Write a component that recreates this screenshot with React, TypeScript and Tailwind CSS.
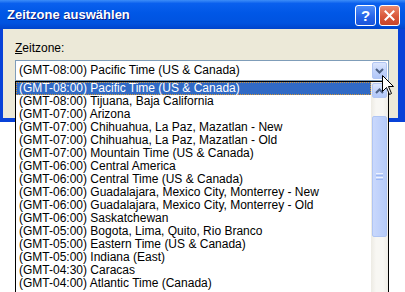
const zones = [
  '(GMT-08:00) Pacific Time (US & Canada)',
  '(GMT-08:00) Tijuana, Baja California',
  '(GMT-07:00) Arizona',
  '(GMT-07:00) Chihuahua, La Paz, Mazatlan - New',
  '(GMT-07:00) Chihuahua, La Paz, Mazatlan - Old',
  '(GMT-07:00) Mountain Time (US & Canada)',
  '(GMT-06:00) Central America',
  '(GMT-06:00) Central Time (US & Canada)',
  '(GMT-06:00) Guadalajara, Mexico City, Monterrey - New',
  '(GMT-06:00) Guadalajara, Mexico City, Monterrey - Old',
  '(GMT-06:00) Saskatchewan',
  '(GMT-05:00) Bogota, Lima, Quito, Rio Branco',
  '(GMT-05:00) Eastern Time (US & Canada)',
  '(GMT-05:00) Indiana (East)',
  '(GMT-04:30) Caracas',
  '(GMT-04:00) Atlantic Time (Canada)',
]

function Chevron({ up }: { up?: boolean }) {
  return (
    <svg width="9" height="6" viewBox="0 0 9 6">
      <polyline
        points={up ? '1,5 4.5,1.5 8,5' : '1,1 4.5,4.5 8,1'}
        fill="none"
        stroke="#4D6185"
        strokeWidth="2"
      />
    </svg>
  )
}

export default function App() {
  return (
    <div className="relative w-[405px] h-[292px] overflow-hidden bg-white font-['Liberation_Sans',Arial,sans-serif] text-[12px] text-black">
      {/* Title bar */}
      <div className="flex items-center justify-between h-[29px] pt-[1px] pl-[7px] pr-[5px] bg-[linear-gradient(to_bottom,#3D8DF8_0%,#0A60EE_12%,#0057E6_45%,#0053E0_80%,#0044CC_100%)]">
        <span className="text-white font-bold text-[13px] [text-shadow:1px_1px_0_#0A1A83]">
          Zeitzone auswählen
        </span>
        <div className="flex gap-[3px]">
          <div className="w-[21px] h-[21px] rounded-[3px] border border-white flex items-center justify-center bg-[linear-gradient(to_bottom,#4F8EF9,#2462E8_60%,#1A55DA)] text-white font-bold text-[15px] leading-none">
            ?
          </div>
          <div className="w-[21px] h-[21px] rounded-[3px] border border-white flex items-center justify-center bg-[linear-gradient(to_bottom,#EB8A6E,#D9583B_55%,#C84428)]">
            <svg width="11" height="11" viewBox="0 0 11 11">
              <path d="M1.5 1.5 L9.5 9.5 M9.5 1.5 L1.5 9.5" stroke="white" strokeWidth="2" strokeLinecap="square" />
            </svg>
          </div>
        </div>
      </div>

      {/* Dialog body */}
      <div className="h-[93px] bg-[#ECE9D8] border-l-[3px] border-r-[7px] border-b-[4px] border-[#0842D8] pl-[12px] pt-[13px]">
        <div className="leading-[13px] h-[13px]">
          <span className="underline">Z</span>eitzone:
        </div>
        <div className="mt-[5px] w-[374px] h-[21px] bg-white border border-[#7F9DB9] flex items-center">
          <span className="flex-1 pl-[3px] leading-[19px]">(GMT-08:00) Pacific Time (US &amp; Canada)</span>
          <div className="w-[15px] h-[17px] mr-[1px] rounded-[2px] border border-[#B2C6F3] bg-[linear-gradient(to_bottom,#DCE6FD,#BFD1FA_60%,#B1C7F8)] flex items-center justify-center">
            <Chevron />
          </div>
        </div>
      </div>

      {/* Dropdown list */}
      <div className="absolute left-[15px] top-[81px] w-[374px] h-[240px] bg-white border border-black flex">
        <div className="flex-1 flex flex-col">
          {zones.map((z, i) => (
            <div
              key={z}
              className={
                i === 0
                  ? 'h-[13px] leading-[11px] pl-[2px] bg-[#316AC5] text-white border border-dotted border-[#CE953A] whitespace-nowrap'
                  : 'h-[13px] leading-[13px] pl-[3px] whitespace-nowrap'
              }
            >
              {z}
            </div>
          ))}
        </div>
        <div className="w-[17px] flex flex-col items-center bg-[linear-gradient(to_right,#EDEBE4,#F8F7F3_30%,#F8F7F3_70%,#EFEDE7)]">
          <div className="mt-[1px] w-[15px] h-[15px] rounded-[2px] border border-[#B2C6F3] bg-[linear-gradient(to_bottom,#DCE6FD,#BFD1FA_60%,#B1C7F8)] flex items-center justify-center">
            <Chevron up />
          </div>
          <div className="mt-[18px] w-[15px] h-[121px] rounded-[2px] border border-[#AFC5F4] bg-[linear-gradient(to_right,#C9D8FC,#C0D2FB_50%,#B6CBF8)] flex flex-col items-center justify-center gap-[1px]">
            <div className="w-[7px] h-[1px] bg-[#EEF3FE]" />
            <div className="w-[7px] h-[1px] bg-[#9DB8F4]" />
            <div className="w-[7px] h-[1px] bg-[#EEF3FE]" />
            <div className="w-[7px] h-[1px] bg-[#9DB8F4]" />
          </div>
        </div>
      </div>

      {/* Mouse cursor */}
      <svg className="absolute left-[382px] top-[75px]" width="13" height="21" viewBox="0 0 13 21">
        <path
          d="M0.5 0.5 L0.5 16.5 L4.5 12.5 L7.5 19.5 L9.5 18.5 L6.5 11.5 L11.5 11.5 Z"
          fill="white"
          stroke="black"
          strokeWidth="1"
        />
      </svg>
    </div>
  )
}
